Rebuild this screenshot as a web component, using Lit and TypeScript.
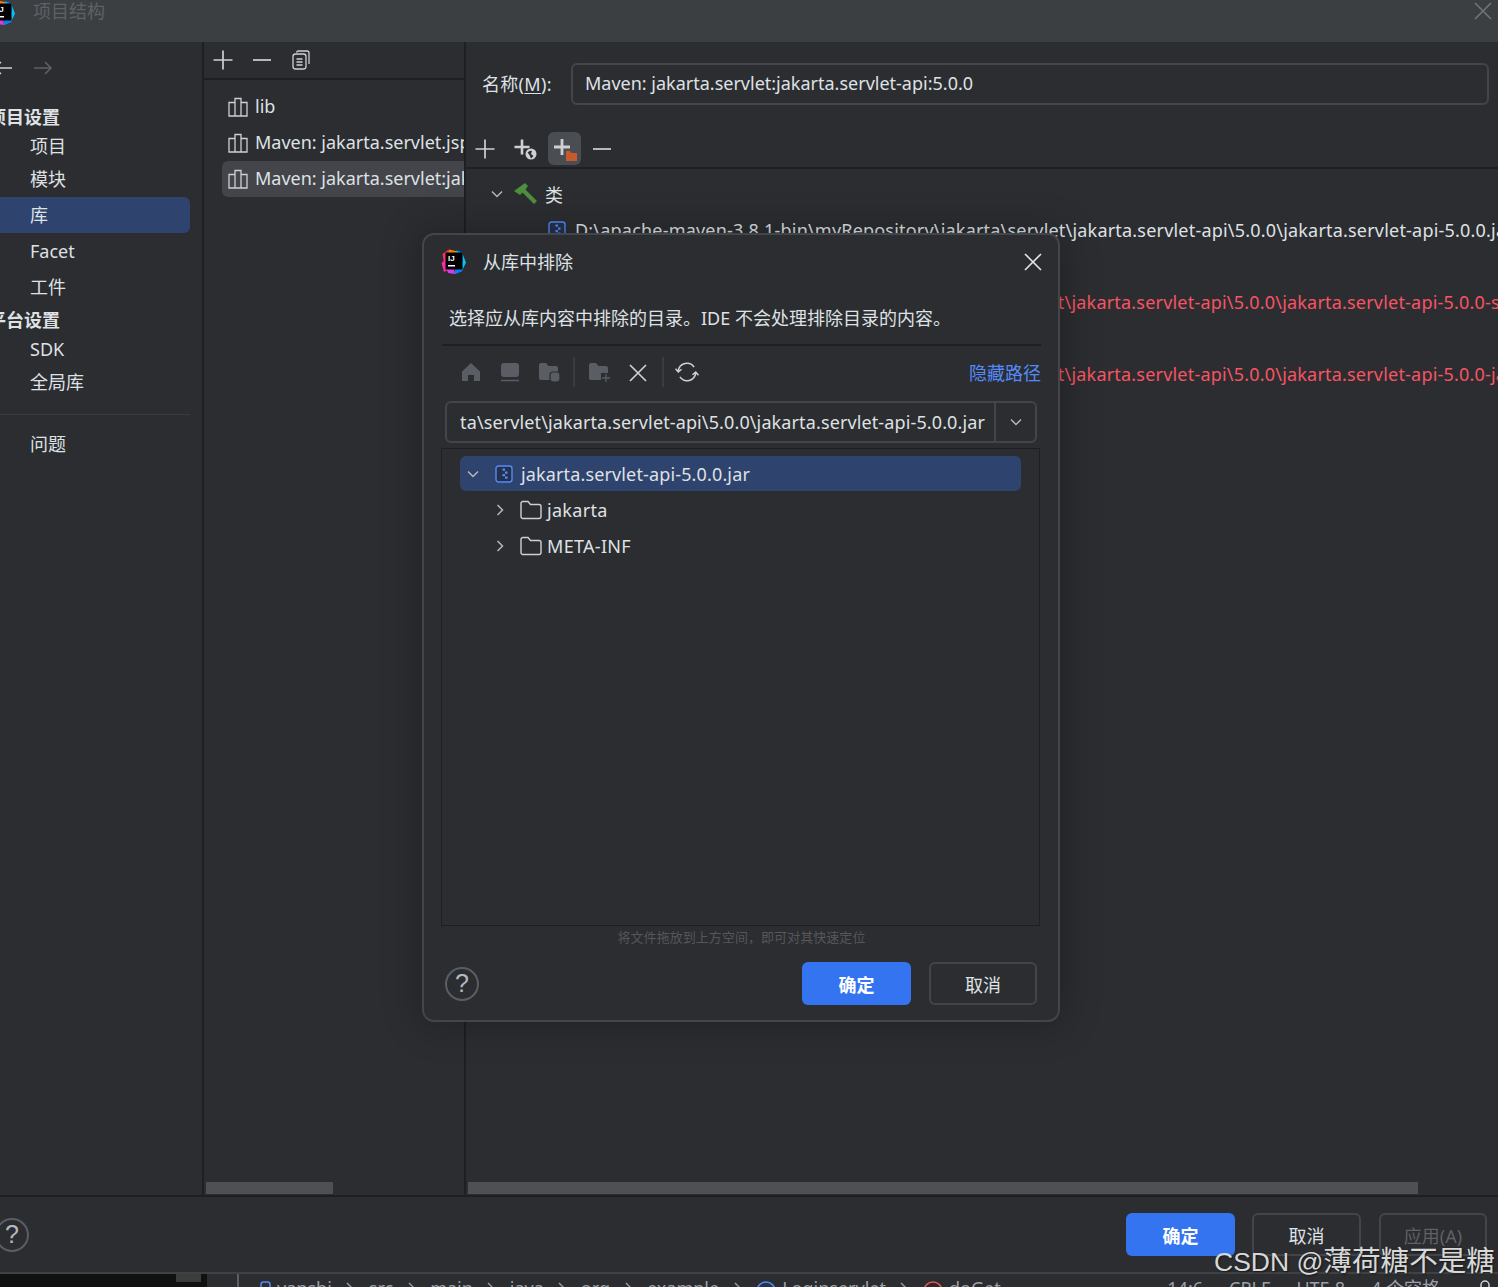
import { LitElement, html, css } from "lit";
import { customElement } from "lit/decorators.js";

const plus = (c = "#ced0d6", s = 22) => html`<svg width=${s} height=${s} viewBox="0 0 22 22"><path d="M11 1.500V20.500M1.500 11H20.500" stroke=${c} stroke-width="1.700" fill="none"/></svg>`;
const minus = () => html`<svg width="22" height="22" viewBox="0 0 22 22"><path d="M2 11H20" stroke="#ced0d6" stroke-width="1.700" fill="none"/></svg>`;
const chev = (down: boolean) => html`<svg width="14" height="14" viewBox="0 0 14 14"><path d=${down ? "M2 4.500L7 9.500L12 4.500" : "M4.500 2L9.500 7L4.500 12"} stroke="#b4b8bf" stroke-width="1.500" fill="none"/></svg>`;
const lib = () => html`<svg class="lib" width="20" height="20" viewBox="0 0 20 20" fill="none" stroke="#ced0d6" stroke-width="1.300"><path d="M1 5.500H7V19H1ZM7 1.500H13V19H7ZM13 5.500H19V19H13Z"/></svg>`;
const jar = () => html`<svg width="18" height="18" viewBox="0 0 18 18"><rect x="1" y="1" width="16" height="16" rx="2.500" fill="#25324d" stroke="#548af7" stroke-width="1.400"/><path d="M7.500 3.500h2.500v2.200H7.500ZM10 6.500h2.500v2.200H10ZM7.500 9h2.500v2.200H7.500ZM10 11.500h2.500v2.200H10Z" fill="#548af7"/></svg>`;
const folder = () => html`<svg width="22" height="20" viewBox="0 0 22 20" fill="none" stroke="#ced0d6" stroke-width="1.400"><path d="M1 3.500A2 2 0 0 1 3 1.500H8L10.500 4.500H19A2 2 0 0 1 21 6.500V16.500A2 2 0 0 1 19 18.500H3A2 2 0 0 1 1 16.500Z"/></svg>`;
const xIcon = (c = "#ced0d6", s = 18) => html`<svg width=${s} height=${s} viewBox="0 0 18 18"><path d="M1 1L17 17M17 1L1 17" stroke=${c} stroke-width="1.700" fill="none"/></svg>`;
const logo = () => html`<svg width="25" height="25" viewBox="0 0 25 25">
  <path d="M8 0.500L15 2L17 5H6Z" fill="#f97a12"/>
  <path d="M1.500 5L7 1L8 8L3 14Z" fill="#fe315d"/>
  <path d="M0.500 14L6 9L7 21L3 23Z" fill="#f82ca8"/>
  <path d="M5 18L13 19L14 25L7 24Z" fill="#d63ce0"/>
  <path d="M15 1.500L21 3.500L25 13.500L21 22L14 25L16 10Z" fill="#07c3f2"/>
  <path d="M17 1.500L21.500 4L22 12L17 8Z" fill="#087cfa"/>
  <path d="M14 25L21 22L22 17L15 17Z" fill="#087cfa"/>
  <rect x="4.500" y="3.500" width="17" height="17" fill="#000"/>
  <text x="7" y="11.500" font-size="8" font-weight="700" fill="#fff" font-family="Liberation Sans">IJ</text>
  <rect x="7" y="16" width="7" height="1.500" fill="#fff"/>
</svg>`;
const crumbChev = () => html`<svg class="cc" width="10" height="14" viewBox="0 0 10 14"><path d="M2 1L8 7L2 13" stroke="#9da0a8" stroke-width="1.400" fill="none"/></svg>`;
const badge = (c: string, fill: string) => html`<svg width="20" height="20" viewBox="0 0 20 20"><circle cx="10" cy="10" r="9" fill=${fill} stroke=${c} stroke-width="1.500"/></svg>`;

const navItems: [string, number, string][] = [
  ["项目设置", 24, "hd"], ["项目", 34, "it"], ["模块", 32, "it"], ["库", 36, "it sel"],
  ["Facet", 36, "it"], ["工件", 36, "it"], ["平台设置", 30, "hd"], ["SDK", 28, "it"], ["全局库", 38, "it"],
];

const P = "D:\\apache-maven-3.8.1-bin\\myRepository\\jakarta\\servlet\\jakarta.servlet-api\\5.0.0\\jakarta.servlet-api-5.0.0";

@customElement("app-root")
export class AppRoot extends LitElement {
  static styles = css`
    :host { display: block; width: 1498px; height: 1287px; position: relative; overflow: hidden; background: #2b2d30; color: #dfe1e5;
      font-family: "Noto Sans", "Noto Sans CJK SC", sans-serif; font-size: 18px; }
    svg { flex: none; }
    .page { display: grid; grid-template-rows: 42px 1155px 75px 15px; height: 1287px; }
    .title { background: #3c3f42; display: flex; align-items: center; position: relative; padding-right: 6px; height: 42px; overflow: hidden; }
    .tlogo { margin: -18px 8px 0 -10px; height: 25px; width: 25px; }
    .ttext { margin: -20px 0 0 10px; color: #5e6165; line-height: 24px; }
    .tclose { margin: -16px 0 0 auto; }
    .main { display: grid; grid-template-columns: 204px 262px 1fr; min-height: 0; border-bottom: 2px solid #1e1f22; }
    .side { border-right: 2px solid #1e1f22; overflow: hidden; display: flex; flex-direction: column; }
    .arrows { height: 52px; margin-bottom: 11px; display: flex; align-items: center; gap: 18px; margin-left: -8px; flex: none; box-sizing: border-box; }
    .row { display: flex; align-items: center; white-space: nowrap; line-height: 24px; flex: none; box-sizing: border-box; }
    .hd { font-weight: 700; margin-left: -13px; width: 190px; padding-left: 13px; color: #dfe1e5; text-indent: -12px; }
    .it { padding-left: 30px; width: 190px; }
    .sel { background: #2e436e; border-radius: 0 6px 6px 0; margin-top: 2px; }
    .sidesep { height: 1px; background: #393b40; margin: 13px 12px 0 0; flex: none; }
    .problems { height: 36px; margin-top: 11px; }
    .navitems { display: flex; flex-direction: column; }
    .middle { border-right: 2px solid #1e1f22; overflow: hidden; display: flex; flex-direction: column; position: relative; }
    .mbar { height: 36px; border-bottom: 2px solid #1e1f22; display: flex; align-items: center; gap: 17px; padding: 0 0 0 8px; flex: none; margin-bottom: 9px; box-sizing: content-box; }
    .lrow { height: 36px; display: flex; align-items: center; gap: 7px; padding-left: 6px; margin-left: 18px; border-radius: 6px 0 0 6px; white-space: nowrap; overflow: hidden; flex: none; }
    .lrow.on { background: #43454a; }
    .lrow span { padding-bottom: 3px; }
    .hbar { position: absolute; bottom: 1px; height: 12px; background: #4e5053; }
    .h1 { left: 2px; width: 127px; }
    .right { position: relative; overflow: hidden; display: flex; flex-direction: column; }
    .name { display: flex; align-items: center; height: 42px; margin-top: 21px; padding-left: 16px; flex: none; }
    .name .lbl { width: 89px; flex: none; padding-bottom: 2px; letter-spacing: .3px; }
    .name u { text-underline-offset: 2px; }
    .input { width: 918px; height: 42px; box-sizing: border-box; border: 2px solid #43454a; border-radius: 6px; display: flex; align-items: center; padding: 0 0 2px 12px; white-space: nowrap; }
    .rbar { height: 35px; margin-top: 27px; border-bottom: 2px solid #1e1f22; display: flex; align-items: center; padding: 0 0 0 2px; flex: none; margin-bottom: 7px; }
    .rbar .btn { width: 33px; height: 33px; border-radius: 6px; display: flex; align-items: center; justify-content: center; flex: none; margin-bottom: 2px; }
    .rbar .hl { background: #4a4d52; }
    .tree { display: flex; flex-direction: column; }
    .t { height: 36px; display: flex; align-items: center; white-space: nowrap; flex: none; }
    .t1 { padding-left: 24px; gap: 5px; }
    .t1 .lab { margin-left: 2px; }
    .t2 { padding-left: 82px; gap: 9px; letter-spacing: .2px; }
    .red { color: #f75464; padding-left: 108px; letter-spacing: .2px; }
    .rhbar { left: 2px; width: 950px; }
    .footer { position: relative; display: flex; align-items: center; padding: 0 11px 0 0; gap: 18px; box-sizing: border-box; height: 75px; }
    .btnx { width: 109px; height: 43px; border-radius: 6px; box-sizing: border-box; display: flex; align-items: center; justify-content: center; flex: none; }
    .primary { background: #3574f0; color: #fff; font-weight: 700; }
    .ghost { border: 2px solid #43454a; }
    .dis { color: #5e6165; width: 108px; }
    .tight { margin-right: -1px; }
    .q { width: 34px; height: 34px; box-sizing: border-box; border: 2px solid #5a5d63; border-radius: 50%; display: flex; align-items: center; justify-content: center; color: #b4b8bf; font-size: 25px; font-weight: 400; flex: none; line-height: 1; font-family: "Liberation Sans", sans-serif; }
    .footer .q { margin-left: -5px; margin-right: auto; }
    .status { background: #2b2d30; border-top: 2px solid #3f4144; box-sizing: border-box; height: 15px; display: flex; overflow: hidden; color: #9da0a8; font-size: 18px; line-height: 24px; white-space: nowrap; }
    .sblack { width: 207px; background: #111; flex: none; display: flex; justify-content: flex-end; padding-right: 6px; box-sizing: border-box; }
    .sblock { width: 25px; height: 8px; background: #3c3c3c; }
    .sgap { width: 30px; flex: none; border-right: 2px solid #5a5d63; box-sizing: content-box; }
    .crumbs { display: flex; gap: 13.500px; margin-left: 21px; margin-top: 2px; }
    .crumbs .cc { margin-top: 6px; }
    .cg { display: flex; gap: 6px; }
    .cg svg { margin-top: 5px; }
    .srt { display: flex; gap: 26px; margin-left: auto; padding-right: 8px; margin-top: 2px; }
    .srt svg { margin: 4px 0 0 6px; }
    .dialog { position: absolute; left: 422px; top: 233px; width: 638px; height: 789px; box-sizing: border-box; background: #2b2d30; border: 2px solid #43454a; border-radius: 12px; box-shadow: 0 0 40px rgba(0,0,0,.3); padding: 0 17px 0 18px; display: flex; flex-direction: column; }
    .dh { height: 52px; display: flex; align-items: center; flex: none; }
    .dh > svg { margin-left: -1px; }
    .dh .dt { margin-left: 17px; }
    .dclose { margin-left: auto; margin-right: -1px; height: 18px; }
    .desc { height: 36px; margin-top: 12px; padding-left: 7px; display: flex; align-items: center; flex: none; white-space: nowrap; font-size: 18px; }
    .dsep { height: 2px; background: #1e1f22; margin-top: 9px; flex: none; }
    .dbar { height: 52px; display: flex; align-items: center; flex: none; padding-left: 18px; }
    .dbar .i { width: 22px; height: 22px; margin-right: 17px; flex: none; }
    .dbar .v { width: 2px; height: 30px; background: #393b40; margin: 0 13px 0 -4px; flex: none; }
    .dbar .x2 { height: 18px; width: 18px; margin-left: 2px; }
    .dbar .v2 { margin-left: -2px; margin-right: 11px; }
    .dbar .sync { width: 24px; height: 24px; }
    .link { margin-left: auto; color: #548af7; }
    .combo { margin: 3px 4px 0 3px; height: 42px; box-sizing: border-box; border: 2px solid #43454a; border-radius: 6px; display: flex; flex: none; }
    .ctext { width: 549px; flex: none; overflow: hidden; display: flex; justify-content: flex-end; align-items: center; padding-right: 9px; white-space: nowrap; box-sizing: border-box; border-right: 2px solid #43454a; letter-spacing: .12px; }
    .cbtn { flex: 1; display: flex; align-items: center; justify-content: center; }
    .dtree { margin: 5px 1px 0 -1px; height: 478px; box-sizing: border-box; border: 1px solid #1e1f22; padding: 7px 18px 0 18px; flex: none; }
    .dt-row { height: 36px; display: flex; align-items: center; white-space: nowrap; }
    .dt-row.on { background: #2e436e; border-radius: 6px; padding-left: 6px; gap: 8px; height: 35px; margin-bottom: 1px; letter-spacing: .14px; }
    .jarw { display: flex; margin-left: 7px; }
    .dt-row.sub { padding-left: 33px; gap: 5px; letter-spacing: .3px; }
    .dt-row.sub svg + svg { margin-left: 8px; }
    .hint { text-align: center; font-size: 13px; color: #55575b; line-height: 22px; height: 22px; flex: none; letter-spacing: .05px; }
    .dfoot { display: flex; align-items: center; gap: 18px; margin-top: 14px; padding-right: 4px; flex: none; }
    .dfoot .q { margin: 0 auto 0 3px; }
    .w108 { width: 108px; }
    .mark { position: absolute; left: 1214px; top: 1244px; color: #d8d8d8; font-family: "Liberation Sans", "Noto Sans CJK SC", sans-serif; line-height: 34px; white-space: nowrap; text-shadow: 1px 1px 2px rgba(0,0,0,.55); }
    .ml { font-size: 26.500px; }
    .mz { font-size: 28.600px; }
  `;

  render() {
    return html`
      <div class="page">
        <div class="title">
          <div class="tlogo">${logo()}</div>
          <div class="ttext">项目结构</div>
          <div class="tclose">${xIcon("#6f7277")}</div>
        </div>
        <div class="main">
          <div class="side">
            <div class="arrows">
              <svg width="22" height="16" viewBox="0 0 22 16"><path d="M20 8H3M9 2L3 8L9 14" stroke="#ced0d6" stroke-width="1.500" fill="none"/></svg>
              <svg width="22" height="16" viewBox="0 0 22 16"><path d="M2 8H19M13 2L19 8L13 14" stroke="#5e6165" stroke-width="1.500" fill="none"/></svg>
            </div>
            <div class="navitems">
              ${navItems.map(([t, h, c]) => html`<div class="row ${c}" style="height:${h}px">${t}</div>`)}
            </div>
            <div class="sidesep"></div>
            <div class="row it problems">问题</div>
          </div>
          <div class="middle">
            <div class="mbar">
              ${plus()}${minus()}
              <svg width="22" height="22" viewBox="0 0 22 22" fill="none" stroke="#ced0d6" stroke-width="1.300"><rect x="3" y="5" width="13" height="15" rx="2.500"/><path d="M6.500 3.500A2 2 0 0 1 8.500 2H17A2 2 0 0 1 19 4V15M6.500 10H12.500M6.500 13H12.500M6.500 16H12.500"/></svg>
            </div>
            <div class="lrow">${lib()}<span>lib</span></div>
            <div class="lrow">${lib()}<span>Maven: jakarta.servlet.jsp:jakarta.servlet.jsp-api</span></div>
            <div class="lrow on">${lib()}<span>Maven: jakarta.servlet:jakarta.servlet-api:5.0.0</span></div>
            <div class="hbar h1"></div>
          </div>
          <div class="right">
            <div class="name"><div class="lbl">名称(<u>M</u>):</div><div class="input">Maven: jakarta.servlet:jakarta.servlet-api:5.0.0</div></div>
            <div class="rbar">
              <div class="btn">${plus()}</div>
              <div class="btn" style="margin-left:7px">
                <svg width="26" height="26" viewBox="0 0 26 26"><path d="M10 3.500V18.500M2.500 11H17.500" stroke="#ced0d6" stroke-width="2.600" fill="none"/><circle cx="19" cy="18" r="5.500" fill="#ced0d6"/><path d="M15.500 16.500Q18 14 20 15L19 18L21.500 20L19 22.500L17.500 19Z" fill="#2b2d30"/></svg>
              </div>
              <div class="btn hl" style="margin-left:7px">
                <svg width="26" height="26" viewBox="0 0 26 26"><path d="M10 3V19M2 11H18" stroke="#ced0d6" stroke-width="2.800" fill="none"/><path d="M14 15H18L19.500 17H25V25H14Z" fill="#c75a2a"/></svg>
              </div>
              <div class="btn" style="margin-left:4px">${minus()}</div>
            </div>
            <div class="tree">
              <div class="t t1">
                ${chev(true)}
                <svg width="26" height="26" viewBox="0 0 26 26" style="margin-left:3px"><path d="M2 10L13 2L16 5L13.500 8.500L25 20L22 23L10.500 11.500L8 14Z" fill="#4d8f3f"/></svg>
                <span class="lab">类</span>
              </div>
              <div class="t t2">${jar()}<span>${P}.jar</span></div>
              <div class="t t1">${chev(true)}<span>源</span></div>
              <div class="t red">${P}-sources.jar</div>
              <div class="t t1">${chev(true)}<span>JavaDoc</span></div>
              <div class="t red">${P}-javadoc.jar</div>
            </div>
            <div class="hbar rhbar"></div>
          </div>
        </div>
        <div class="footer">
          <div class="q">?</div>
          <div class="btnx primary tight">确定</div>
          <div class="btnx ghost">取消</div>
          <div class="btnx ghost dis">应用(A)</div>
        </div>
        <div class="status">
          <div class="sblack"><div class="sblock"></div></div>
          <div class="sgap"></div>
          <div class="crumbs">
            <div class="cg"><svg width="11" height="14" viewBox="0 0 11 14"><rect x="1" y="1" width="9" height="12" rx="2.500" fill="none" stroke="#548af7" stroke-width="1.500"/></svg><span>yanshi</span></div>
            ${crumbChev()}<span>src</span>
            ${crumbChev()}<span>main</span>
            ${crumbChev()}<span>java</span>
            ${crumbChev()}<span>org</span>
            ${crumbChev()}<span>example</span>
            ${crumbChev()}<div class="cg">${badge("#548af7", "#25324d")}<span>Loginservlet</span></div>
            ${crumbChev()}<div class="cg">${badge("#db5c5c", "#3d2326")}<span>doGet</span></div>
          </div>
          <div class="srt"><span>14:6</span><span>CRLF</span><span>UTF-8</span><span>4 个空格</span>
            <svg width="18" height="14" viewBox="0 0 18 14"><path d="M9 7V5A4 4 0 0 1 17 5V7" fill="none" stroke="#ced0d6" stroke-width="1.500"/><rect x="1" y="7" width="12" height="7" fill="#ced0d6"/></svg>
          </div>
        </div>
      </div>

      <div class="dialog">
        <div class="dh">
          ${logo()}
          <div class="dt">从库中排除</div>
          <div class="dclose">${xIcon("#dfe1e5")}</div>
        </div>
        <div class="desc">选择应从库内容中排除的目录。IDE 不会处理排除目录的内容。</div>
        <div class="dsep"></div>
        <div class="dbar">
          <svg class="i" viewBox="0 0 22 22"><path d="M11 2L20 10.500V20H14V14H8V20H2V10.500Z" fill="#5a5d63"/></svg>
          <svg class="i" viewBox="0 0 22 22"><rect x="2" y="2" width="18" height="14" rx="3" fill="#5a5d63"/><path d="M2 19.500H20" stroke="#5a5d63" stroke-width="1.500"/></svg>
          <svg class="i" viewBox="0 0 22 22"><path d="M1 4A2 2 0 0 1 3 2H8L10.500 5H18A2 2 0 0 1 20 7V19H3A2 2 0 0 1 1 17Z" fill="#5a5d63"/><rect x="12" y="11" width="10" height="10" rx="3" fill="#5a5d63" stroke="#2b2d30" stroke-width="1.200"/></svg>
          <div class="v"></div>
          <svg class="i" viewBox="0 0 22 22"><path d="M1 4A2 2 0 0 1 3 2H8L10.500 5H18A2 2 0 0 1 20 7V12H13V19H3A2 2 0 0 1 1 17Z" fill="#5a5d63"/><path d="M18 13V21M14 17H22" stroke="#5a5d63" stroke-width="1.300" fill="none"/></svg>
          <div class="i x2">${xIcon()}</div>
          <div class="v v2"></div>
          <svg class="i sync" viewBox="0 0 22 22" fill="none" stroke="#ced0d6" stroke-width="1.400"><path d="M3 10A8 8 0 0 1 17.500 6.500M19 12A8 8 0 0 1 4.500 15.500M0.500 8L3 11L6 8.500M16 13.500L19 11L21.500 14"/></svg>
          <div class="link">隐藏路径</div>
        </div>
        <div class="combo">
          <div class="ctext"><span>ta\\servlet\\jakarta.servlet-api\\5.0.0\\jakarta.servlet-api-5.0.0.jar</span></div>
          <div class="cbtn">${chev(true)}</div>
        </div>
        <div class="dtree">
          <div class="dt-row on">${chev(true)}<span class="jarw">${jar()}</span><span>jakarta.servlet-api-5.0.0.jar</span></div>
          <div class="dt-row sub">${chev(false)}${folder()}<span>jakarta</span></div>
          <div class="dt-row sub">${chev(false)}${folder()}<span>META-INF</span></div>
        </div>
        <div class="hint">将文件拖放到上方空间，即可对其快速定位</div>
        <div class="dfoot">
          <div class="q">?</div>
          <div class="btnx primary">确定</div>
          <div class="btnx ghost w108">取消</div>
        </div>
      </div>
      <div class="mark"><span class="ml">CSDN @</span><span class="mz">薄荷糖不是糖</span></div>
    `;
  }
}
